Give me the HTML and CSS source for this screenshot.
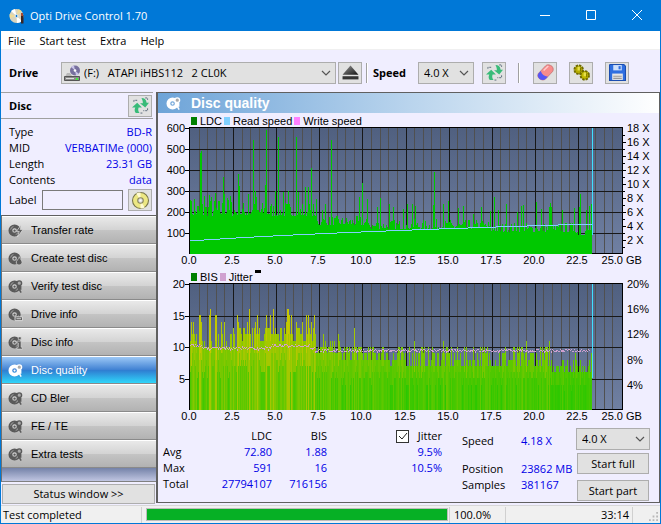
FILE: index.html
```html
<!DOCTYPE html>
<html lang="en">

<head>
  <meta charset="UTF-8" />
  <meta name="viewport" content="width=device-width, initial-scale=1.0" />
  <title>Opti Drive Control 1.70</title>
  <link rel="stylesheet" href="styles.css">
</head>

<body>
  <!-- shared icons -->
  <svg class="defs" aria-hidden="true">
    <symbol id="disc" viewBox="0 0 16 16">
      <circle cx="7" cy="8" r="4.5" fill="none" stroke="currentColor" stroke-width="4" />
      <circle cx="7" cy="8" r="1.200" fill="currentColor" />
      <path d="M2.800 7a4.500 4.500 0 0 1 3-3.300M11.200 9a4.500 4.500 0 0 1-3 3.300" fill="none" stroke="#fff" stroke-opacity=".45" />
    </symbol>
    <symbol id="disc-search" viewBox="0 0 16 16">
      <use href="#disc" width="16" height="16" />
      <circle cx="12" cy="4.500" r="2.500" fill="#aaa" stroke="currentColor" stroke-width="1.500" />
      <path d="M10 7.500l4 7M13.500 7.500v4" stroke="currentColor" stroke-width="1.600" />
    </symbol>
    <symbol id="disc-bolt" viewBox="0 0 16 16">
      <use href="#disc" width="16" height="16" />
      <path d="M14 2l-5 7h3l-2 6 6-8h-3z" fill="currentColor" stroke="#ddd" stroke-width=".8" />
    </symbol>
    <symbol id="disc-burn" viewBox="0 0 16 16">
      <use href="#disc" width="16" height="16" />
      <path d="M12 6c0 3-4 4-3 7 1 3 6 2 6-1 0-2-2-3-3-6z" fill="currentColor" stroke="#ccc" stroke-width=".8" />
    </symbol>
    <symbol id="disc-drive" viewBox="0 0 16 16">
      <use href="#disc" width="16" height="16" />
      <path d="M7.500 10.500h8v4h-8z" fill="currentColor" stroke="#ddd" />
      <path d="M9 12.500h5" stroke="#ddd" />
    </symbol>
    <symbol id="disc-i" viewBox="0 0 16 16">
      <use href="#disc" width="16" height="16" />
      <path d="M9.500 6.500H14V13h1.500v2h-6v-2H11V8.500H9.500zM11 2h3v3h-3z" fill="currentColor" stroke="#ddd" stroke-width=".7" />
    </symbol>
    <symbol id="refresh" viewBox="0 0 18 18">
      <path d="M4 17c-1.500-2-1.500-4-.5-6H0l5.500-5 5 5H7c-.8 2-.5 4 1 6z" fill="#38bb78" />
      <path d="M10 1c3 0 5 1.500 5.500 5H18l-4 5-5.500-4.500H11.500c0-2-.5-4-1.500-5.500z" fill="#38bb78" />
      <path d="M2 5V3.500h4M16.500 12v2.500H12M9 17h2M14 1h2.500v2" fill="none" stroke="#567" stroke-dasharray="2 1" />
    </symbol>
    <symbol id="gold-disc" viewBox="0 0 16 16">
      <circle cx="8" cy="8" r="7.500" fill="#ece783" stroke="#77744a" />
      <path d="M8 8L4 1.500a7 7 0 0 1 4-1zM8 8l4 6.500a7 7 0 0 1-4 1z" fill="#fffbd2" />
      <circle cx="8" cy="8" r="2.600" fill="#ddd" stroke="#88855a" />
      <circle cx="8" cy="8" r="1" fill="#fff" />
    </symbol>
    <symbol id="chevron" viewBox="0 0 10 6">
      <path d="M1 1l4 4 4-4" fill="none" stroke="#555" stroke-width="1.200" />
    </symbol>
  </svg>

  <div class="window">
    <header class="titlebar">
      <svg class="icon" viewBox="0 0 16 16" aria-hidden="true">
        <circle cx="7.500" cy="8" r="7" fill="#d9d4bd" />
        <path d="M7.500 8L2 3a7 7 0 0 1 4-2zM7.500 8L13 13a7 7 0 0 1-5 2z" fill="#fff" />
        <path d="M7.500 8L1 10l-.5-4zM7.500 8l2-7 3 2z" fill="#f0dc96" />
        <circle cx="7.500" cy="8" r="1.500" fill="#0078d7" stroke="#eee" />
        <path d="M12 7h2.500v8.500H12z" fill="#3a2522" />
        <path d="M12 5h2v3h-2z" fill="#a84a32" />
      </svg>
      <h1>Opti Drive Control 1.70</h1>
      <div class="captions">
        <button type="button" aria-label="Minimize"><svg viewBox="0 0 10 10"><path d="M0 5.500h10" /></svg></button>
        <button type="button" aria-label="Maximize"><svg viewBox="0 0 10 10"><path d="M.5.5h9v9h-9z" /></svg></button>
        <button type="button" aria-label="Close"><svg viewBox="0 0 10 10"><path d="M0 0l10 10M10 0L0 10" /></svg></button>
      </div>
    </header>

    <nav class="menu">
      <a href="#file">File</a>
      <a href="#start">Start test</a>
      <a href="#extra">Extra</a>
      <a href="#help">Help</a>
    </nav>

    <div class="toolbar">
      <label class="drive-label" for="drive">Drive</label>
      <div class="select drive">
        <svg class="drive-icon" viewBox="0 0 17 17" aria-hidden="true">
          <circle cx="11" cy="5.500" r="5" fill="#77709e" />
          <path d="M11 5.500L7 2a5 5 0 0 1 3-1.500zM11 5.500l4 3.500a5 5 0 0 1-3 1.500z" fill="#c9c4e8" />
          <circle cx="11" cy="5.500" r="1.300" fill="#fff" />
          <path d="M3 8h3l2 3h6l2 1H1z" fill="#b8b8b8" />
          <path d="M.5 11.500h15v4H.5z" fill="#8d8d8d" stroke="#555" />
          <path d="M2 13.500h8" stroke="#ddd" />
          <path d="M12 13h2v2h-2z" fill="#3df03d" />
        </svg>
        <select id="drive">
          <option>(F:) &nbsp; ATAPI iHBS112 &nbsp; 2 CL0K</option>
        </select>
        <svg class="chevron"><use href="#chevron" /></svg>
      </div>
      <button class="tool" type="button" aria-label="Eject">
        <svg viewBox="0 0 16 16">
          <linearGradient id="ej" x2="1" y2="1"><stop stop-color="#999" /><stop offset="1" stop-color="#111" /></linearGradient>
          <path d="M8 1.500L15.500 10H.5z" fill="url(#ej)" />
          <path d="M.5 11.500h15v3H.5z" fill="#333" />
        </svg>
      </button>
      <span class="sep"></span>
      <label class="speed-label" for="speed">Speed</label>
      <div class="select speed">
        <select id="speed"><option>4.0 X</option></select>
        <svg class="chevron"><use href="#chevron" /></svg>
      </div>
      <button class="tool refresh" type="button" aria-label="Refresh speed"><svg><use href="#refresh" /></svg></button>
      <span class="sep wide"></span>
      <button class="tool" type="button" aria-label="Erase">
        <svg viewBox="0 0 18 18">
          <path d="M1.500 10L9 2c2-2 5-1 7 .5 1.500 2 1.500 4 .5 5.500L9 16c-2 1.500-4.500 1-6.500-.5-2-2-2-3.500-1-5.500z" fill="#f88c8c" stroke="#b66" stroke-width=".7" />
          <path d="M1.500 10L4 7.500c1 3.500 3.500 5.500 7.500 6L9 16c-2 1.500-4.500 1-6.500-.5-2-2-2-3.500-1-5.500z" fill="#5555f5" />
          <path d="M7 7l5-5" stroke="#fcc" stroke-width="1.500" />
        </svg>
      </button>
      <button class="tool" type="button" aria-label="Settings">
        <svg viewBox="0 0 18 18">
          <circle cx="6" cy="6" r="4.500" fill="#b5ad00" stroke="#6f6a00" stroke-width="2" stroke-dasharray="2.500 1" />
          <circle cx="12.500" cy="12" r="4.500" fill="#c0b800" stroke="#6f6a00" stroke-width="2" stroke-dasharray="2.500 1" />
          <path d="M6 3v4M12.500 9v4" stroke="#e6df4a" stroke-width="2.500" />
          <path d="M8 4v4M14.500 10v4" stroke="#7a7400" />
        </svg>
      </button>
      <button class="tool" type="button" aria-label="Save">
        <svg viewBox="0 0 16 16">
          <path d="M1 .5h13L15.500 2v13.500H.5V1z" fill="#2f6fe0" stroke="#1b4db0" />
          <path d="M4 1h8v5H4z" fill="#cfe0fa" />
          <path d="M9 2h2v3H9z" fill="#2f6fe0" />
          <path d="M3 9h10v6H3z" fill="#e6e6e6" />
          <path d="M4 11.500h8M4 13.500h8" stroke="#999" />
        </svg>
      </button>
    </div>

    <div class="content">
      <aside class="sidebar">
        <div class="disc-head">
          <h2>Disc</h2>
          <button class="tool" type="button" aria-label="Refresh disc"><svg><use href="#refresh" /></svg></button>
        </div>
        <dl class="disc-info">
          <dt>Type</dt><dd>BD-R</dd>
          <dt>MID</dt><dd>VERBATIMe (000)</dd>
          <dt>Length</dt><dd>23.31 GB</dd>
          <dt>Contents</dt><dd>data</dd>
        </dl>
        <div class="disc-label">
          <label for="label">Label</label>
          <input type="text" id="label" />
          <button class="tool" type="button" aria-label="Write label"><svg><use href="#gold-disc" /></svg></button>
        </div>
        <nav class="tests">
          <a href="#transfer"><svg><use href="#disc-bolt" /></svg>Transfer rate</a>
          <a href="#create"><svg><use href="#disc-burn" /></svg>Create test disc</a>
          <a href="#verify"><svg><use href="#disc-search" /></svg>Verify test disc</a>
          <a href="#drive-info"><svg><use href="#disc-drive" /></svg>Drive info</a>
          <a href="#disc-info"><svg><use href="#disc-i" /></svg>Disc info</a>
          <a href="#quality" class="active"><svg><use href="#disc-search" /></svg>Disc quality</a>
          <a href="#bler"><svg><use href="#disc-search" /></svg>CD Bler</a>
          <a href="#fete"><svg><use href="#disc-search" /></svg>FE / TE</a>
          <a href="#tests"><svg><use href="#disc-search" /></svg>Extra tests</a>
        </nav>
        <button class="btn status-toggle" type="button">Status window &gt;&gt;</button>
      </aside>

      <main class="panel">
        <h2 class="panel-title"><svg><use href="#disc-search" /></svg>Disc quality</h2>

        <div class="legend">
          <span class="key ldc">LDC</span>
          <span class="key read">Read speed</span>
          <span class="key write">Write speed</span>
        </div>
        <svg class="chart" id="ldcChart" viewBox="0 0 501 143"></svg>

        <div class="legend">
          <span class="key ldc">BIS</span>
          <span class="key jit">Jitter</span>
          <span class="dash"></span>
        </div>
        <svg class="chart" id="bisChart" viewBox="0 0 501 143"></svg>

        <div class="results">
          <table class="stats">
            <thead>
              <tr>
                <td></td>
                <th scope="col">LDC</th>
                <th scope="col">BIS</th>
                <th scope="col"><label class="check"><input type="checkbox" checked /><svg viewBox="0 0 13 13"><path d="M3 6l3 3 5-6" /></svg>Jitter</label></th>
              </tr>
            </thead>
            <tbody>
              <tr><th scope="row">Avg</th><td>72.80</td><td>1.88</td><td>9.5%</td></tr>
              <tr><th scope="row">Max</th><td>591</td><td>16</td><td>10.5%</td></tr>
              <tr><th scope="row">Total</th><td>27794107</td><td>716156</td><td></td></tr>
            </tbody>
          </table>
          <dl class="progress-info">
            <dt>Speed</dt><dd>4.18 X</dd>
            <dt>Position</dt><dd>23862 MB</dd>
            <dt>Samples</dt><dd>381167</dd>
          </dl>
          <div class="actions">
            <div class="select">
              <select aria-label="Test speed"><option>4.0 X</option></select>
              <svg class="chevron"><use href="#chevron" /></svg>
            </div>
            <button class="btn" type="button">Start full</button>
            <button class="btn" type="button">Start part</button>
          </div>
        </div>
      </main>
    </div>

    <footer class="statusbar">
      <span class="message">Test completed</span>
      <progress value="100" max="100" aria-label="Test progress"></progress>
      <span class="percent">100.0%</span>
      <span class="time">33:14</span>
      <svg class="grip" viewBox="0 0 10 10" aria-hidden="true"><path d="M8 0h2v2H8zM8 4h2v2H8zM8 8h2v2H8zM4 4h2v2H4zM4 8h2v2H4zM0 8h2v2H0z" /></svg>
    </footer>
  </div>

  <script src="charts.js"></script>
</body>

</html>
```
FILE: styles.css
```css
* {
  box-sizing: border-box;
}

body {
  margin: 0;
  font-family: "Open Sans", "Noto Sans", sans-serif;
  font-size: 11px;
  line-height: 16px;
  color: #000;
}

h1,
h2,
dl,
dd {
  margin: 0;
  font-size: inherit;
}

a {
  color: inherit;
  text-decoration: none;
}

button,
input,
select {
  font: inherit;
  color: inherit;
  margin: 0;
}

.defs {
  position: absolute;
  width: 0;
  height: 0;
}

.window {
  min-height: 100vh;
  display: flex;
  flex-direction: column;
  border: 1px solid #0078d7;
  background: #f0eeff;
}

/* title bar and menu */
.titlebar {
  display: flex;
  align-items: center;
  height: 30px;
  padding-left: 8px;
  background: #0078d7;
  color: #fff;
}

.titlebar h1 {
  flex: 1;
  margin-left: 5px;
  font-size: 11px;
  font-weight: normal;
}

.icon {
  width: 16px;
  height: 16px;
}

.captions {
  display: flex;
}

.captions button {
  width: 46px;
  height: 30px;
  padding: 0;
  border: 0;
  background: none;
}

.captions svg {
  width: 10px;
  height: 10px;
  fill: none;
  stroke: #fff;
}

.menu {
  display: flex;
  gap: 14px;
  height: 19px;
  padding: 2px 7px;
  background: #fff;
  border-bottom: 1px solid #f0f0f0;
}

/* toolbar */
.toolbar {
  display: flex;
  align-items: center;
  height: 42px;
  padding: 3px 8px 0;
  font-weight: bold;
}

.drive-label {
  width: 52px;
}

.speed-label {
  width: 45px;
}

.select {
  position: relative;
  font-weight: normal;
}

.select select {
  width: 100%;
  height: 22px;
  padding: 0 5px;
  border: 1px solid #adadad;
  border-radius: 0;
  background: #e1e1e1;
  appearance: none;
}

.select .chevron {
  position: absolute;
  right: 5px;
  top: 8px;
  width: 10px;
  height: 6px;
  pointer-events: none;
}

.drive {
  flex: 0 1 275px;
  margin-right: 2px;
}

.drive select {
  padding-left: 22px;
}

.drive-icon {
  position: absolute;
  left: 3px;
  top: 3px;
  width: 17px;
  height: 17px;
}

.speed {
  width: 56px;
}

.tool {
  display: flex;
  flex: none;
  align-items: center;
  justify-content: center;
  width: 24px;
  height: 22px;
  padding: 0;
  border: 1px solid #adadad;
  background: #e1e1e1;
}

.tool svg {
  width: 17px;
  height: 17px;
}

.tool + .tool {
  margin-left: 12px;
}

.refresh {
  margin-left: 8px;
}

.sep {
  width: 2px;
  height: 20px;
  margin: 0 5px 0 4px;
  border-left: 1px solid #a0a0a0;
  border-right: 1px solid #fff;
}

.sep.wide {
  margin: 0 13px 0 12px;
}

/* sidebar */
.content {
  flex: 1;
  display: grid;
  grid-template-columns: 155px 1fr;
}

.sidebar {
  display: flex;
  flex-direction: column;
}

.disc-head {
  display: flex;
  align-items: center;
  justify-content: space-between;
  height: 27px;
  margin-right: 3px;
  padding: 0 1px 0 8px;
  border-top: 1px solid #a0a0a0;
  border-bottom: 1px solid #a0a0a0;
}

.disc-info {
  display: grid;
  grid-template-columns: auto 1fr;
  padding: 5px 4px 0 8px;
}

.disc-info dd,
.progress-info dd {
  color: #0000e6;
}

.disc-info dd {
  text-align: right;
}

.disc-label {
  display: flex;
  align-items: center;
  gap: 5px;
  padding: 1px 4px 4px 8px;
}

.disc-label input {
  flex: 1;
  min-width: 0;
  height: 20px;
  border: 1px solid #7a7a7a;
  background: #f0eeff;
}

.tests {
  flex: 1;
  padding-bottom: 12px;
  border-left: 1px solid #707070;
  border-top: 1px solid #606060;
  border-bottom: 1px solid #808080;
  background: linear-gradient(#7482a8 252px, #c6cbe6 266px);
  font-family: "Liberation Sans", Arial, sans-serif;
}

.tests a {
  display: flex;
  align-items: center;
  gap: 8px;
  height: 28px;
  padding-left: 6px;
  border-top: 1px solid #fff;
  border-bottom: 1px solid #8a8a8a;
  background: linear-gradient(#e9e9e9, #d3d3d3 50%, #c4c4c4 50%, #b2b2b2);
}

.tests svg {
  width: 15px;
  height: 15px;
  color: #5a5a5a;
}

.tests .active {
  background: linear-gradient(#9cc8f6, #3f80d2 50%, #2f7fd2 52%, #30d6fa);
  color: #fff;
}

.tests .active svg {
  color: #fff;
}

.btn {
  height: 21px;
  padding: 0;
  border: 1px solid #adadad;
  background: #e1e1e1;
}

.status-toggle {
  flex: none;
  height: 20px;
  margin: 2px 1px 1px;
}

/* result panel */
.panel {
  border: 1px solid #606060;
  border-left-width: 2px;
  margin-bottom: 2px;
}

.panel-title {
  display: flex;
  align-items: center;
  gap: 10px;
  height: 20px;
  padding-left: 8px;
  background: linear-gradient(to right, #6ea4d8, #b9d4ed 50%, #fff);
  color: #fff;
  font: bold 14px "Liberation Sans", Arial, sans-serif;
}

.panel-title svg {
  width: 15px;
  height: 15px;
}

.legend {
  display: flex;
  align-items: center;
  gap: 2px;
  height: 13px;
  padding: 3px 0 0 33px;
  font: 11px "Liberation Sans", Arial, sans-serif;
}

.key {
  display: flex;
  align-items: center;
  gap: 3px;
}

.key::before {
  content: "";
  width: 6px;
  height: 8px;
}

.ldc::before {
  background: #008000;
}

.read::before {
  background: #80d0ff;
}

.write::before {
  background: #ff80ff;
}

.jit::before {
  background: #d0a0d0;
}

.dash {
  align-self: flex-start;
  width: 6px;
  height: 3px;
  margin-top: -2px;
  background: #000;
}

.chart {
  display: block;
  width: 100%;
  overflow: visible;
  shape-rendering: crispEdges;
  font: 11px "Liberation Sans", Arial, sans-serif;
}

.results {
  display: flex;
  align-items: flex-start;
  padding: 3px 9px 0 5px;
}

.stats {
  border-collapse: collapse;
  width: 279px;
  table-layout: fixed;
}

.stats th,
.stats td {
  padding: 0;
  font-weight: normal;
  text-align: right;
}

.stats thead td {
  width: 54px;
}

.stats thead th:nth-child(3) {
  width: 55px;
}

.stats thead th:nth-child(4) {
  width: 115px;
}

.stats tbody th {
  text-align: left;
}

.stats tbody td {
  color: #0000e6;
}

.check {
  display: flex;
  align-items: center;
  justify-content: flex-end;
  gap: 9px;
}

.check input {
  appearance: none;
  width: 13px;
  height: 13px;
  border: 1px solid #333;
  background: #fff;
}

/* tick lies over the box */
.check svg {
  width: 13px;
  height: 13px;
  margin-left: -22px;
  fill: none;
  stroke: #222;
  pointer-events: none;
  z-index: 1;
}

.check input:not(:checked) + svg {
  visibility: hidden;
}

.progress-info {
  display: grid;
  grid-template-columns: 59px 55px;
  grid-template-rows: 28px 16px 16px;
  margin-left: auto;
  padding-top: 5px;
  white-space: nowrap;
}

.actions {
  display: grid;
  gap: 3px;
  width: 74px;
}

.actions .btn {
  margin: 0 1px;
}

.actions .btn:last-child {
  margin-top: 3px;
}

/* status bar */
.statusbar {
  display: grid;
  grid-template-columns: 139px minmax(0, 306px) 58px 1fr 27px;
  align-items: center;
  gap: 0;
  height: 18px;
  padding-left: 2px;
  border-top: 1px solid #d7d7d7;
  background: #f0f0f0;
}

.message {
  border-right: 1px solid #d0d0d0;
}

.statusbar progress {
  appearance: none;
  width: auto;
  height: 13px;
  margin-left: 4px;
  border: 1px solid #bcbcbc;
  background: #e6e6e6;
}

progress::-webkit-progress-bar {
  background: #e6e6e6;
}

progress::-webkit-progress-value {
  background: #06b025;
}

.percent {
  margin-left: 1px;
  padding-left: 4px;
  border-left: 1px solid #d0d0d0;
  border-right: 1px solid #d0d0d0;
}

.time {
  padding-right: 3px;
  border-right: 1px solid #d0d0d0;
  text-align: right;
}

.grip {
  width: 9px;
  height: 9px;
  justify-self: end;
  align-self: end;
  margin: 0 2px 2px 0;
  fill: #b8b8b8;
}
```
FILE: charts.js
```js
const LEFT = 32;
const TOP = 2;
const WIDTH = 432;
const HEIGHT = 126;
const BOTTOM = TOP + HEIGHT;
const PER_GB = 43.1 / 2.5;
const END = 402; // 23.31 GB

let seed = 7;
function rnd() {
  seed = (seed * 16807) % 2147483647;
  return seed / 2147483647;
}

function rect(x, y, w, h, fill) {
  return `<rect x="${x}" y="${y}" width="${w}" height="${h}" fill="${fill}"/>`;
}

function text(x, y, anchor, s) {
  return `<text x="${x}" y="${y}" text-anchor="${anchor}">${s}</text>`;
}

function frame(id, rows) {
  let s = `<linearGradient id="${id}Bg" x2="0" y2="1"><stop stop-color="#506080"/><stop offset="1" stop-color="#7080a2"/></linearGradient>`;
  s += rect(LEFT, TOP, WIDTH, HEIGHT, `url(#${id}Bg)`);
  for (let i = 1; i < 50; i++) {
    if (i % 5) s += rect(LEFT + Math.round(i * 0.5 * PER_GB), TOP, 1, HEIGHT, '#505050');
  }
  for (let i = 1; i < 10; i++) s += rect(LEFT + Math.round(i * 43.1), TOP, 1, HEIGHT, '#181818');
  for (let i = 1; i < rows; i++) s += rect(LEFT, TOP + Math.round(i * HEIGHT / rows), WIDTH, 1, '#181818');
  return s;
}

function axes(rows, step) {
  let s = rect(LEFT - 1, TOP - 1, WIDTH + 2, 1, '#000') + rect(LEFT - 1, TOP, 1, HEIGHT, '#000');
  s += rect(LEFT + WIDTH, TOP, 1, HEIGHT, '#000') + rect(LEFT + END, BOTTOM - 1, WIDTH - END, 1, '#000');
  for (let i = 0; i < rows; i++) {
    const y = TOP + Math.round(i * HEIGHT / rows);
    s += rect(LEFT - 5, y, 4, 1, '#000') + text(LEFT - 5, y + 4, 'end', (rows - i) * step);
  }
  for (let i = 0; i < 10; i++) {
    s += text(LEFT - 1 + Math.round(i * 43.1), BOTTOM + 10, 'middle', (i * 2.5).toFixed(1));
  }
  s += text(LEFT + 433, BOTTOM + 10, 'end', '25.0') + text(LEFT + 436, BOTTOM + 10, 'start', 'GB');
  return s;
}

// LDC: [column, errors]
const ldcPeaks = [
  [0, 255], [4, 260], [10, 480], [11, 492], [14, 275], [19, 280], [21, 270], [25, 290], [33, 368], [34, 285],
  [37, 268], [40, 275], [48, 382], [49, 325], [58, 285], [63, 545], [65, 300], [66, 270], [75, 330], [76, 592], [85, 300],
  [88, 558], [93, 295], [98, 300], [106, 556], [108, 295], [115, 320], [118, 318], [121, 410], [126, 260],
  [132, 210], [135, 240], [141, 542], [169, 270], [172, 338], [177, 262], [187, 225], [190, 265], [199, 240],
  [203, 225], [213, 215], [217, 238], [222, 240], [225, 230], [243, 235], [244, 392], [253, 240], [258, 250],
  [268, 220], [273, 230], [283, 190], [291, 225], [300, 205], [304, 272], [308, 210], [316, 240], [327, 200],
  [331, 230], [333, 232], [346, 248], [351, 215], [359, 225], [360, 245], [361, 225], [372, 210], [384, 220], [389, 225],
  [390, 287], [396, 210], [399, 230], [401, 240]
];
const ldc = [];
for (let x = 0; x < END; x++) {
  const base = x < 125 ? 182 : x < 180 ? 138 : x < 300 ? 120 : x < 386 ? 106 : 90;
  const spread = x < 45 ? 85 : x < 125 ? 70 : 45;
  ldc[x] = base + Math.pow(rnd(), 2) * spread;
}
ldcPeaks.forEach(([x, v]) => { ldc[x] = v; });

let s = frame('ldc', 6);
ldc.forEach((v, x) => {
  const h = Math.round(v * HEIGHT / 600);
  s += rect(LEFT + x, BOTTOM - h, 1, h, '#00c800');
});

// read speed rises one pixel at each of these columns
const steps = [0, 14, 30, 46, 64, 83, 103, 125, 147, 171, 196, 222, 249, 278, 306, 337, 368, END];
for (let i = 0; i < steps.length - 1; i++) {
  s += rect(LEFT + steps[i], TOP + 112 - i, steps[i + 1] - steps[i], 1, '#80d0ff');
}
s += rect(LEFT + END, TOP, 1, 107, '#40e0ff');
s += axes(6, 100);
for (let i = 1; i < 18; i++) s += rect(LEFT + WIDTH, BOTTOM - i * 7, i % 2 ? 3 : 4, 1, '#000');
for (let i = 2; i <= 18; i += 2) s += text(LEFT + 437, BOTTOM - i * 7 + 4, 'start', i + ' X');
document.getElementById('ldcChart').innerHTML = s;

// BIS
const bisPeaks = [
  [9, 15], [10, 15], [11, 14], [19, 15], [20, 16], [25, 15], [26, 15], [31, 14], [47, 15], [48, 14], [59, 16], [65, 14], [67, 15],
  [76, 15], [80, 15], [83, 16], [97, 16], [98, 16], [99, 15], [101, 15], [106, 14], [112, 14], [116, 15], [118, 15],
  [121, 14], [124, 15], [133, 12], [148, 12], [164, 13], [224, 11], [253, 11], [336, 11], [359, 11]
];
const bis = [];
for (let x = 0; x < END; x++) {
  const r = rnd();
  if (x < 70) bis[x] = 10 + Math.floor(r * r * 4.5);
  else if (x < 126) bis[x] = 11 + Math.floor(r * 3.3);
  else if (x < 150) bis[x] = 9 + Math.floor(r * 2.5);
  else if (x < 200) bis[x] = 8 + Math.floor(r * 3);
  else if (x < 360) bis[x] = 7 + Math.floor(Math.pow(r, 1.4) * 4);
  else bis[x] = 6 + Math.floor(r * 3.2);
}
bisPeaks.forEach(([x, v]) => { bis[x] = v; });

function shade(v) {
  return `rgb(${Math.round(Math.min(1, Math.max(0, (v - 1.5) / 14)) * 200)},200,0)`;
}

s = frame('bis', 4);
bis.forEach((v, x) => {
  const h = Math.round(v * HEIGHT / 20);
  const low = v * (0.5 + rnd() * 0.3);
  const lh = Math.round(Math.round(low) * HEIGHT / 20);
  s += rect(LEFT + x, BOTTOM - h, 1, h, shade(v));
  s += rect(LEFT + x, BOTTOM - lh, 1, lh, shade(v > 14 ? 13 : low + 1));
});

for (let x = 0; x < END - 2; x++) {
  const base = x < 12 || (x > 80 && x < 120) ? 10.3 : x < 125 ? 9.9 : 9.5;
  const y = BOTTOM - Math.round((base + (rnd() - 0.5) * 0.4) * HEIGHT / 20);
  s += rect(LEFT + x, y, 1, rnd() > 0.8 ? 2 : 1, '#d0a0d0');
}
s += rect(LEFT + END, TOP, 1, 94, '#40e0ff');
s += axes(4, 5);
for (let i = 4; i <= 20; i += 4) s += text(LEFT + 437, BOTTOM - Math.round(i * HEIGHT / 20) + 4, 'start', i + '%');
document.getElementById('bisChart').innerHTML = s;
```
